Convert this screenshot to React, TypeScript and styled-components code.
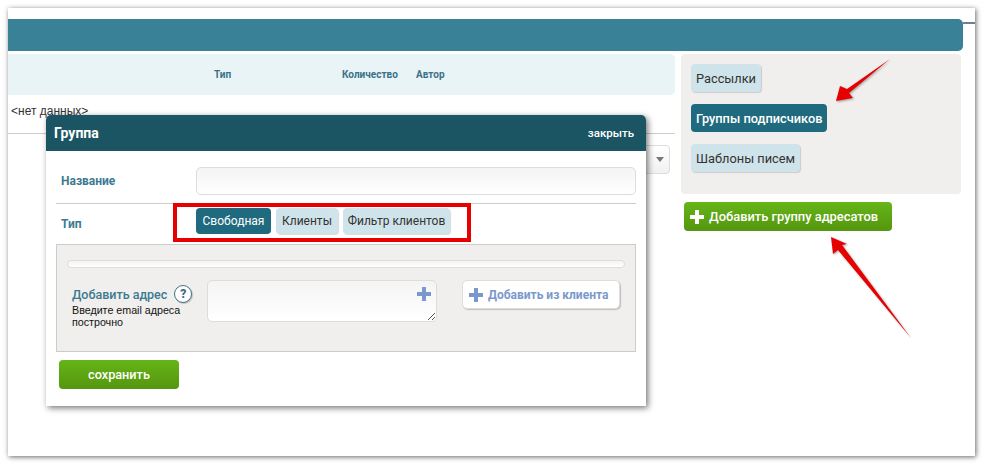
import React from 'react';
import styled, { createGlobalStyle } from 'styled-components';

const GlobalStyle = createGlobalStyle`
  html, body { margin: 0; padding: 0; background: #fff; }
  body { font-family: Roboto, "Liberation Sans", sans-serif; width: 983px; height: 464px; overflow: hidden; }
  * { box-sizing: border-box; }
`;

const Shot = styled.div`
  position: relative;
  margin: 8px 0 0 8px;
  width: 967px;
  height: 448px;
  padding-top: 11px;
  background: #fff;
  box-shadow: 1px 1px 5px rgba(0, 0, 0, 0.6);
`;

const TopBar = styled.div`
  position: relative;
  height: 32px;
  margin-right: 12px;
  background: #388196;
  border-radius: 0 5px 5px 0;
  &::after {
    content: '';
    position: absolute;
    left: 100%;
    top: 3px;
    width: 12px;
    height: 2px;
    background: #6f7f92;
  }
`;

const Content = styled.div`
  display: grid;
  grid-template-columns: 667px 280px;
  column-gap: 6px;
  margin-top: 3px;
`;

const TableHead = styled.div`
  display: grid;
  grid-template-columns: 206px 128px 74px 1fr;
  align-items: center;
  height: 41px;
  background: #e8f4f6;
  border-radius: 0 5px 5px 0;
`;

const HeadCell = styled.div<{ $col: number }>`
  grid-column: ${(p) => p.$col};
  font-size: 10px;
  font-weight: 700;
  color: #3b7186;
`;

const EmptyRow = styled.div`
  height: 39px;
  padding: 9px 0 0 3px;
  font-family: "Liberation Sans", sans-serif;
  font-size: 12px;
  color: #333;
  border-bottom: 1px solid #ccc;
`;

const SelectRow = styled.div`
  display: flex;
  justify-content: flex-end;
  padding: 11px 5px 0 0;
`;

const SelectBox = styled.div`
  display: flex;
  align-items: center;
  justify-content: flex-end;
  width: 120px;
  height: 29px;
  padding-right: 5px;
  background: linear-gradient(#fff, #f1f1f1);
  border: 1px solid #ddd;
  border-radius: 4px;
`;

const Caret = styled.span`
  width: 0;
  height: 0;
  border-left: 4px solid transparent;
  border-right: 4px solid transparent;
  border-top: 5px solid #777;
`;

const Side = styled.div`
  display: flex;
  flex-direction: column;
  align-items: flex-start;
`;

const SidePanel = styled.div`
  display: flex;
  flex-direction: column;
  align-items: flex-start;
  gap: 12px;
  width: 100%;
  height: 140px;
  padding: 10px;
  background: #f0efed;
  border-radius: 4px;
`;

const Chip = styled.div<{ $active?: boolean }>`
  display: flex;
  align-items: center;
  height: 28px;
  padding: 0 5px;
  font-size: 12.8px;
  font-weight: ${(p) => (p.$active ? 500 : 400)};
  white-space: nowrap;
  color: ${(p) => (p.$active ? '#fff' : '#333')};
  background: ${(p) => (p.$active ? '#1f6a7e' : '#cfe4ea')};
  border-radius: 4px;
  box-shadow: ${(p) => (p.$active ? 'none' : '1px 1px 1px rgba(0, 0, 0, 0.15)')};
`;

const TypeTab = styled.div<{ $active?: boolean; $width: number }>`
  display: flex;
  align-items: center;
  justify-content: center;
  width: ${(p) => p.$width}px;
  height: 26px;
  font-size: 12px;
  white-space: nowrap;
  color: ${(p) => (p.$active ? '#fff' : '#333')};
  background: ${(p) => (p.$active ? '#1f6a7e' : '#cfe4ea')};
  border-radius: 4px;
  box-shadow: ${(p) => (p.$active ? 'none' : '1px 1px 1px rgba(0, 0, 0, 0.15)')};
`;

const AddGroupButton = styled.div`
  display: flex;
  align-items: center;
  gap: 5px;
  width: 208px;
  height: 29px;
  margin: 8px 0 0 3px;
  padding-left: 6px;
  font-size: 12.9px;
  font-weight: 500;
  color: #fff;
  white-space: nowrap;
  background: linear-gradient(#66b518, #54960f);
  border-radius: 4px;
`;

const Modal = styled.div`
  position: absolute;
  left: 38px;
  top: 107px;
  width: 600px;
  height: 291px;
  background: #fff;
  border-radius: 5px 5px 0 0;
  box-shadow: 2px 2px 6px rgba(0, 0, 0, 0.55);
`;

const ModalHead = styled.div`
  display: flex;
  align-items: center;
  justify-content: space-between;
  height: 36px;
  padding: 0 12px 0 8px;
  color: #fff;
  background: #1b5564;
  border-radius: 5px 5px 0 0;
`;

const ModalTitle = styled.div`
  font-size: 14px;
  font-weight: 700;
`;

const CloseLink = styled.div`
  font-size: 11.5px;
  font-weight: 500;
`;

const ModalBody = styled.div`
  padding: 0 10px;
`;

const FormRow = styled.div<{ $line?: boolean }>`
  position: relative;
  display: flex;
  align-items: center;
  height: ${(p) => (p.$line ? 35 : 53)}px;
  padding-top: ${(p) => (p.$line ? 4 : 8)}px;
  ${(p) => (p.$line ? 'border-bottom: none;' : 'border-bottom: 1px solid #ccc;')}
`;

const FormLabel = styled.div`
  width: 140px;
  padding-left: 5px;
  font-size: 12px;
  font-weight: 700;
  color: #3b7a90;
`;

const TextInput = styled.div`
  width: 440px;
  height: 28px;
  background: linear-gradient(#f4f4f4, #fff);
  border: 1px solid #ddd;
  border-radius: 5px;
`;

const Tabs = styled.div`
  display: flex;
  gap: 5px;
  margin-top: -5px;
`;

const RedFrame = styled.div`
  position: absolute;
  left: 117px;
  top: -1px;
  width: 298px;
  height: 39px;
  border: 4px solid #e60000;
  pointer-events: none;
`;

const GreyPanel = styled.div`
  width: 580px;
  height: 108px;
  margin-top: 5px;
  padding: 15px 10px 0;
  background: #f0efed;
  border: 1px solid #ccc;
`;

const Progress = styled.div`
  height: 8px;
  background: linear-gradient(#f3f3f3, #fff);
  border: 1px solid #ddd;
  border-radius: 4px;
`;

const AddressRow = styled.div`
  display: flex;
  align-items: flex-start;
  margin-top: 12px;
`;

const AddressInfo = styled.div`
  width: 140px;
  padding: 5px 0 0 5px;
`;

const AddressTitle = styled.div`
  display: flex;
  align-items: center;
  gap: 7px;
  height: 18px;
  font-size: 12.5px;
  font-weight: 500;
  color: #3b7a90;
  white-space: nowrap;
`;

const HelpMark = styled.span`
  display: flex;
  align-items: center;
  justify-content: center;
  width: 18px;
  height: 18px;
  font-size: 12px;
  font-weight: 900;
  color: #3f6f82;
  background: #fff;
  border: 1.5px solid #3f7488;
  border-radius: 50%;
  box-shadow: 1px 1px 1px rgba(0, 0, 0, 0.2);
`;

const AddressHint = styled.div`
  margin-top: 1px;
  width: 116px;
  font-family: "Liberation Sans", sans-serif;
  font-size: 10.7px;
  line-height: 12px;
  color: #111;
`;

const TextArea = styled.div`
  position: relative;
  width: 230px;
  height: 42px;
  background: linear-gradient(#f4f4f4, #fff);
  border: 1px solid #ddd;
  border-radius: 5px;
`;

const AreaPlus = styled.svg`
  position: absolute;
  right: 5px;
  top: 6px;
`;

const Grip = styled.svg`
  position: absolute;
  right: 0;
  bottom: 0;
`;

const FromClientButton = styled.div`
  display: flex;
  align-items: center;
  gap: 5px;
  width: 158px;
  height: 29px;
  margin-left: 25px;
  padding-left: 6px;
  font-size: 12px;
  font-weight: 700;
  color: #7b98cc;
  white-space: nowrap;
  background: #fff;
  border: 1px solid #ddd;
  border-radius: 5px;
  box-shadow: 1px 1px 1px rgba(0, 0, 0, 0.2);
`;

const SaveButton = styled.div`
  display: flex;
  align-items: center;
  justify-content: center;
  width: 120px;
  height: 29px;
  margin: 8px 0 0 3px;
  font-size: 12.7px;
  font-weight: 500;
  color: #fff;
  background: linear-gradient(#66b518, #54960f);
  border-radius: 4px;
`;

const ArrowLayer = styled.svg`
  position: absolute;
  left: 0;
  top: 0;
  pointer-events: none;
  filter: drop-shadow(1px 1px 1px rgba(0, 0, 0, 0.35));
`;

const Plus = ({ size, color }: { size: number; color: string }) => (
  <svg width={size} height={size} viewBox="0 0 14 14">
    <path d="M5 0h4v5h5v4H9v5H5V9H0V5h5z" fill={color} />
  </svg>
);

const App = () => (
  <>
    <GlobalStyle />
    <Shot>
      <TopBar />
      <Content>
        <div>
          <TableHead>
            <HeadCell $col={2}>Тип</HeadCell>
            <HeadCell $col={3}>Количество</HeadCell>
            <HeadCell $col={4}>Автор</HeadCell>
          </TableHead>
          <EmptyRow>&lt;нет данных&gt;</EmptyRow>
          <SelectRow>
            <SelectBox>
              <Caret />
            </SelectBox>
          </SelectRow>
        </div>
        <Side>
          <SidePanel>
            <Chip>Рассылки</Chip>
            <Chip $active>Группы подписчиков</Chip>
            <Chip>Шаблоны писем</Chip>
          </SidePanel>
          <AddGroupButton>
            <Plus size={14} color="#fff" />
            Добавить группу адресатов
          </AddGroupButton>
        </Side>
      </Content>

      <Modal>
        <ModalHead>
          <ModalTitle>Группа</ModalTitle>
          <CloseLink>закрыть</CloseLink>
        </ModalHead>
        <ModalBody>
          <FormRow>
            <FormLabel>Название</FormLabel>
            <TextInput />
          </FormRow>
          <FormRow $line>
            <FormLabel>Тип</FormLabel>
            <Tabs>
              <TypeTab $active $width={75}>Свободная</TypeTab>
              <TypeTab $width={62}>Клиенты</TypeTab>
              <TypeTab $width={107}>Фильтр клиентов</TypeTab>
            </Tabs>
            <RedFrame />
          </FormRow>
          <GreyPanel>
            <Progress />
            <AddressRow>
              <AddressInfo>
                <AddressTitle>
                  Добавить адрес
                  <HelpMark>?</HelpMark>
                </AddressTitle>
                <AddressHint>Введите email адреса построчно</AddressHint>
              </AddressInfo>
              <TextArea>
                <AreaPlus width="14" height="14" viewBox="0 0 14 14">
                  <path d="M5 0h4v5h5v4H9v5H5V9H0V5h5z" fill="#7b98cc" />
                </AreaPlus>
                <Grip width="9" height="9" viewBox="0 0 9 9">
                  <path d="M1 8 8 1M5 8 8 5" stroke="#555" strokeWidth="1" fill="none" />
                </Grip>
              </TextArea>
              <FromClientButton>
                <Plus size={14} color="#7b98cc" />
                Добавить из клиента
              </FromClientButton>
            </AddressRow>
          </GreyPanel>
          <SaveButton>сохранить</SaveButton>
        </ModalBody>
      </Modal>

      {/* стрелки поверх скриншота, координаты как на исходной картинке */}
      <ArrowLayer width="967" height="448" viewBox="8 8 967 448">
        <path d="M890 59 L847 89 L840 86 L836 101 L853 98 L849 93 Z" fill="#e60000" />
        <path d="M911 338 L842 245 L847 244 L831 237 L833 254 L838 250 Z" fill="#e60000" />
      </ArrowLayer>
    </Shot>
  </>
);

export default App;
